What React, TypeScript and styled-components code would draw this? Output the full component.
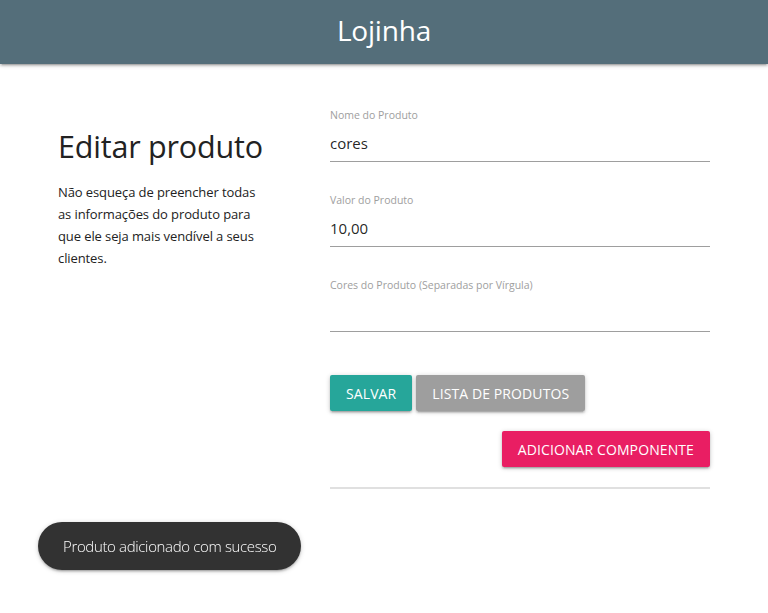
import React from "react";
import styled, { createGlobalStyle } from "styled-components";

const GlobalStyle = createGlobalStyle`
  * { box-sizing: border-box; }
  body {
    margin: 0;
    background: #ffffff;
    font-family: "Open Sans", "Noto Sans", sans-serif;
    color: rgba(0, 0, 0, 0.87);
  }
`;

const Navbar = styled.nav`
  height: 64px;
  background: #546e7a;
  display: flex;
  align-items: center;
  justify-content: center;
  box-shadow: 0 2px 2px 0 rgba(0, 0, 0, 0.14), 0 3px 1px -2px rgba(0, 0, 0, 0.12),
    0 1px 5px 0 rgba(0, 0, 0, 0.2);
`;

const Brand = styled.a`
  color: #ffffff;
  font-size: 28px;
  letter-spacing: -0.2px;
  text-decoration: none;
  margin-top: -4px;
`;

const Container = styled.main`
  width: 652px;
  margin: 0 auto;
  padding-top: 44px;
  display: grid;
  grid-template-columns: 222px 380px;
  column-gap: 50px;
`;

const Intro = styled.section`
  padding-top: 18px;
`;

const Heading = styled.h4`
  margin: 0 0 15px;
  font-size: 30.5px;
  font-weight: 400;
  letter-spacing: -0.2px;
  color: #222;
  line-height: 40px;
`;

const Lead = styled.p`
  margin: 0;
  width: 210px;
  font-size: 13px;
  line-height: 22px;
  letter-spacing: -0.1px;
  color: #222;
`;

const Form = styled.form`
  display: flex;
  flex-direction: column;
`;

const Field = styled.label`
  display: flex;
  flex-direction: column;
  height: 85px;
`;

const FieldLabel = styled.span`
  font-size: 10.5px;
  color: #9e9e9e;
  line-height: 14px;
`;

const Input = styled.input`
  border: none;
  border-bottom: 1px solid #9e9e9e;
  outline: none;
  height: 38px;
  padding: 0;
  margin-top: 2px;
  font-family: inherit;
  font-size: 15px;
  color: rgba(0, 0, 0, 0.87);
  background: transparent;
`;

const Actions = styled.div`
  display: flex;
  gap: 4px;
  margin-top: 12px;
`;

const Button = styled.button<{ $bg: string }>`
  height: 36px;
  padding: 0 16px;
  border: none;
  border-radius: 2px;
  background: ${({ $bg }) => $bg};
  color: #ffffff;
  font-family: inherit;
  font-size: 14px;
  letter-spacing: 0.1px;
  text-transform: uppercase;
  cursor: pointer;
  box-shadow: 0 2px 2px 0 rgba(0, 0, 0, 0.14), 0 3px 1px -2px rgba(0, 0, 0, 0.12),
    0 1px 5px 0 rgba(0, 0, 0, 0.2);
`;

const AddRow = styled.div`
  display: flex;
  justify-content: flex-end;
  margin-top: 20px;
`;

const Divider = styled.hr`
  margin: 20px 0 0;
  border: none;
  border-top: 2px solid #e0e0e0;
`;

const Toast = styled.div`
  position: fixed;
  left: 38px;
  top: 522px;
  height: 48px;
  padding: 0 25px;
  display: flex;
  align-items: center;
  border-radius: 24px;
  background: #323232;
  color: #ffffff;
  font-size: 15px;
  font-weight: 300;
  letter-spacing: -0.35px;
  box-shadow: 0 2px 2px 0 rgba(0, 0, 0, 0.14), 0 3px 1px -2px rgba(0, 0, 0, 0.12),
    0 1px 5px 0 rgba(0, 0, 0, 0.2);
`;

export default function App() {
  return (
    <>
      <GlobalStyle />
      <Navbar>
        <Brand href="#">Lojinha</Brand>
      </Navbar>
      <Container>
        <Intro>
          <Heading>Editar produto</Heading>
          <Lead>
            Não esqueça de preencher todas as informações do produto para que ele seja mais
            vendível a seus clientes.
          </Lead>
        </Intro>
        <Form onSubmit={(e) => e.preventDefault()}>
          <Field>
            <FieldLabel>Nome do Produto</FieldLabel>
            <Input defaultValue="cores" />
          </Field>
          <Field>
            <FieldLabel>Valor do Produto</FieldLabel>
            <Input defaultValue="10,00" />
          </Field>
          <Field>
            <FieldLabel>Cores do Produto (Separadas por Vírgula)</FieldLabel>
            <Input defaultValue="" />
          </Field>
          <Actions>
            <Button type="submit" $bg="#26a69a">Salvar</Button>
            <Button type="button" $bg="#9e9e9e">Lista de Produtos</Button>
          </Actions>
          <AddRow>
            <Button type="button" $bg="#e91e63">Adicionar Componente</Button>
          </AddRow>
          <Divider />
        </Form>
      </Container>
      <Toast>Produto adicionado com sucesso</Toast>
    </>
  );
}
